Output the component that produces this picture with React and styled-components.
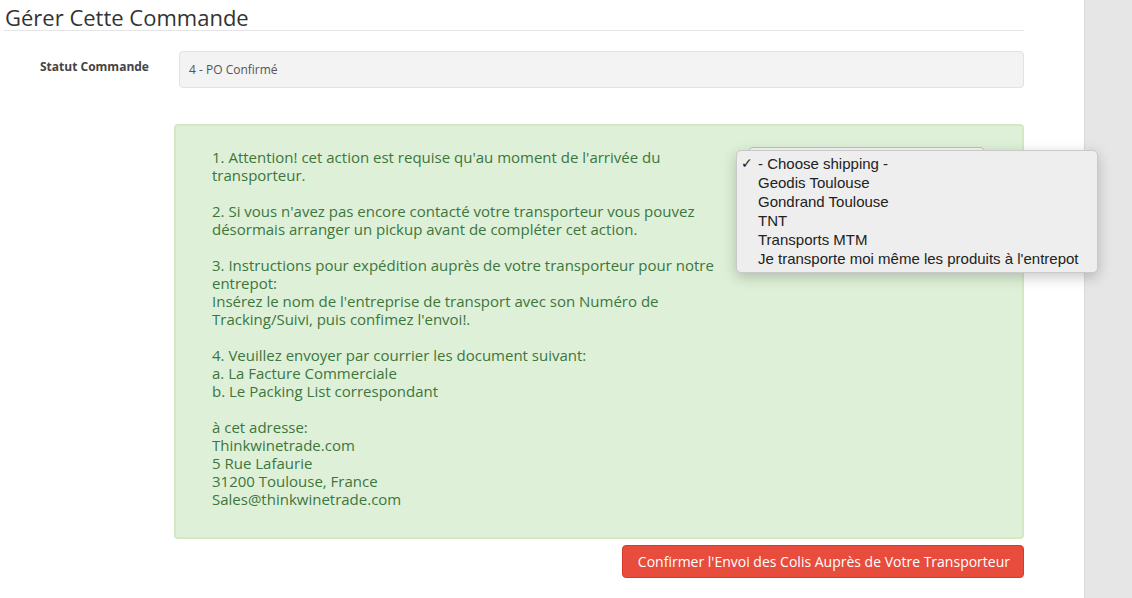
import React from 'react';
import styled, { createGlobalStyle } from 'styled-components';

const shippingOptions = [
  '- Choose shipping -',
  'Geodis Toulouse',
  'Gondrand Toulouse',
  'TNT',
  'Transports MTM',
  "Je transporte moi même les produits à l'entrepot",
];

export default function App() {
  return (
    <Page>
      <GlobalStyle />
      <Main>
        <Title>Gérer Cette Commande</Title>
        <FormRow>
          <Label>Statut Commande</Label>
          <StaticInput>4 - PO Confirmé</StaticInput>
        </FormRow>

        <Alert>
          <AlertText>
            <p>
              1. Attention! cet action est requise qu'au moment de l'arrivée du transporteur.
            </p>
            <p>
              2. Si vous n'avez pas encore contacté votre transporteur vous pouvez désormais
              arranger un pickup avant de compléter cet action.
            </p>
            <p>
              3. Instructions pour expédition auprès de votre transporteur pour notre entrepot:
              <br />
              Insérez le nom de l'entreprise de transport avec son Numéro de Tracking/Suivi, puis
              confimez l'envoi!.
            </p>
            <p>
              4. Veuillez envoyer par courrier les document suivant:
              <br />
              a. La Facture Commerciale
              <br />
              b. Le Packing List correspondant
            </p>
            <p>
              à cet adresse:
              <br />
              Thinkwinetrade.com
              <br />
              5 Rue Lafaurie
              <br />
              31200 Toulouse, France
              <br />
              Sales@thinkwinetrade.com
            </p>
          </AlertText>

          <SelectBox>
            <Menu>
              {shippingOptions.map((opt, i) => (
                <MenuItem key={opt}>
                  <Check>{i === 0 ? '✓' : ''}</Check>
                  {opt}
                </MenuItem>
              ))}
            </Menu>
          </SelectBox>
        </Alert>

        <Actions>
          <DangerButton>Confirmer l'Envoi des Colis Auprès de Votre Transporteur</DangerButton>
        </Actions>
      </Main>
      <Sidebar />
    </Page>
  );
}

//#region styles
const GlobalStyle = createGlobalStyle`
  html, body {
    margin: 0;
    padding: 0;
    background: #fff;
  }
  body {
    font-family: "Open Sans", "Liberation Sans", sans-serif;
    color: #333;
  }
`;

const Page = styled.div`
  display: flex;
  height: 598px;
  overflow: hidden;
`;

const Main = styled.div`
  flex: 0 0 1084px;
  box-sizing: border-box;
  padding: 4px 60px 0 4px;
`;

const Sidebar = styled.div`
  flex: 1;
  background: #e6e6e6;
  border-left: 1px solid #d9d9d9;
`;

const Title = styled.h3`
  margin: 0;
  font-size: 22px;
  font-weight: 400;
  line-height: 26px;
  color: #333;
  border-bottom: 1px solid #e5e5e5;
  padding-left: 1px;
`;

const FormRow = styled.div`
  display: grid;
  grid-template-columns: 175px 1fr;
  align-items: center;
  margin-top: 20px;
`;

const Label = styled.label`
  font-size: 12px;
  font-weight: 700;
  color: #444;
  padding-left: 36px;
  margin-top: -6px;
`;

const StaticInput = styled.div`
  height: 37px;
  box-sizing: border-box;
  background: #f3f3f3;
  border: 1px solid #e2e2e2;
  border-radius: 4px;
  padding: 0 9px;
  font-size: 12px;
  line-height: 35px;
  color: #555;
`;

const Alert = styled.div`
  display: flex;
  gap: 11px;
  margin: 36px 0 0 170px;
  padding: 22px 20px 29px 36px;
  background: #dff0d8;
  border: 2px solid #d3e8c4;
  border-radius: 4px;
  color: #3c763d;
`;

const AlertText = styled.div`
  width: 525px;
  font-size: 15px;
  line-height: 18px;

  p {
    margin: 0 0 18px;
  }
  p:last-child {
    margin-bottom: 0;
  }
`;

const SelectBox = styled.div`
  position: relative;
  width: 237px;
  height: 30px;
  box-sizing: border-box;
  margin-top: -1px;
  background: #f8f8f8;
  border: 1px solid #bdbdbd;
  border-radius: 5px;
`;

const Menu = styled.ul`
  position: absolute;
  z-index: 10;
  left: -13px;
  top: 2px;
  width: 362px;
  box-sizing: border-box;
  margin: 0;
  padding: 3px 0 4px;
  list-style: none;
  background: #eeeeee;
  border: 1px solid #c9c9c9;
  border-radius: 5px;
  box-shadow: 0 4px 14px rgba(0, 0, 0, 0.22);
  font-family: "Liberation Sans", Arial, sans-serif;
  font-size: 15px;
  line-height: 19px;
  color: #222;
`;

const MenuItem = styled.li`
  display: flex;
  white-space: nowrap;
`;

const Check = styled.span`
  width: 21px;
  padding-left: 4px;
  box-sizing: border-box;
  font-family: "DejaVu Sans", sans-serif;
  font-size: 14px;
`;

const Actions = styled.div`
  display: flex;
  justify-content: flex-end;
  margin-top: 6px;
`;

const DangerButton = styled.button`
  height: 33px;
  padding: 0 13px 0 15px;
  background: #e74c3c;
  border: 1px solid #d63a2a;
  border-radius: 4px;
  color: #fff;
  font-family: "Open Sans", "Liberation Sans", sans-serif;
  font-size: 14px;
  cursor: pointer;
`;
//#endregion
